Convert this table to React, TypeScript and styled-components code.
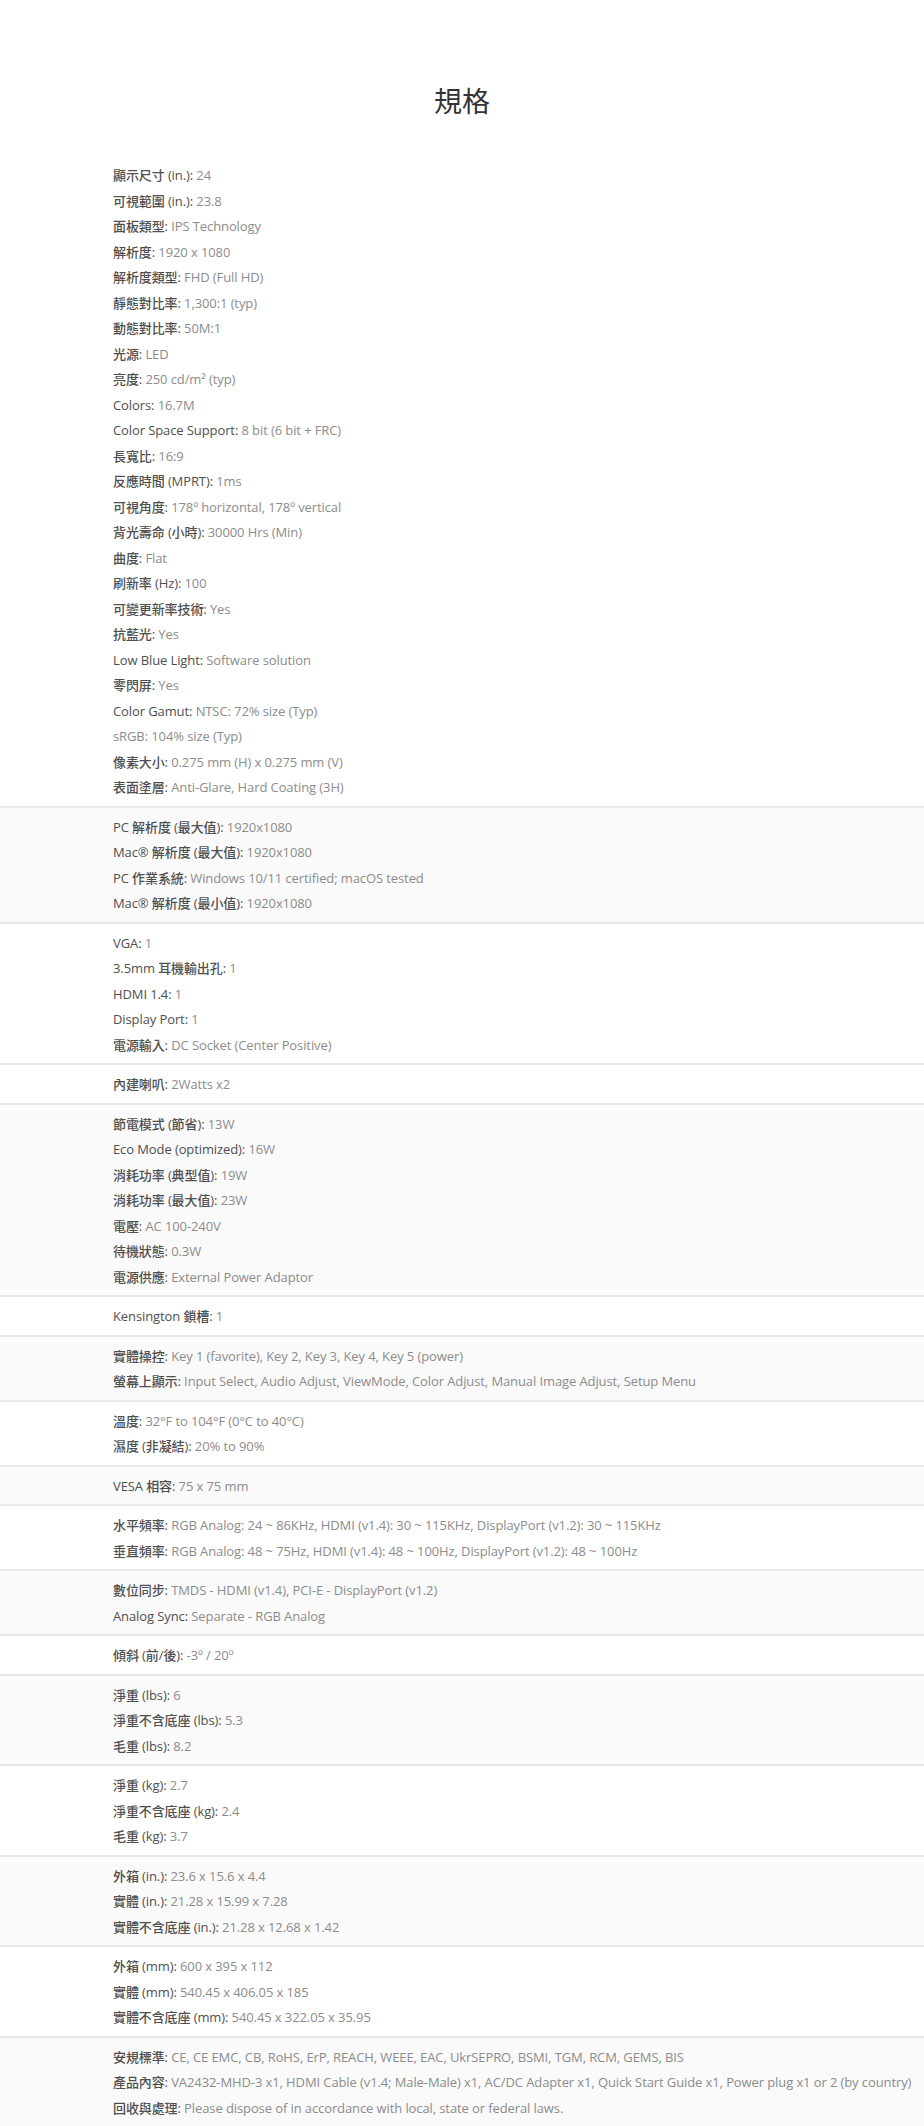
import styled, { createGlobalStyle } from 'styled-components'

type Spec = { label?: string; value: string }
type Group = { shaded?: boolean; rows: Spec[] }

const GlobalStyle = createGlobalStyle`
  html, body {
    margin: 0;
    padding: 0;
    background: #fff;
  }
  body {
    font-family: "Open Sans", "Noto Sans CJK TC", sans-serif;
  }
`

const groups: Group[] = [
  {
    rows: [
      { label: '顯示尺寸 (in.)', value: '24' },
      { label: '可視範圍 (in.)', value: '23.8' },
      { label: '面板類型', value: 'IPS Technology' },
      { label: '解析度', value: '1920 x 1080' },
      { label: '解析度類型', value: 'FHD (Full HD)' },
      { label: '靜態對比率', value: '1,300:1 (typ)' },
      { label: '動態對比率', value: '50M:1' },
      { label: '光源', value: 'LED' },
      { label: '亮度', value: '250 cd/m² (typ)' },
      { label: 'Colors', value: '16.7M' },
      { label: 'Color Space Support', value: '8 bit (6 bit + FRC)' },
      { label: '長寬比', value: '16:9' },
      { label: '反應時間 (MPRT)', value: '1ms' },
      { label: '可視角度', value: '178º horizontal, 178º vertical' },
      { label: '背光壽命 (小時)', value: '30000 Hrs (Min)' },
      { label: '曲度', value: 'Flat' },
      { label: '刷新率 (Hz)', value: '100' },
      { label: '可變更新率技術', value: 'Yes' },
      { label: '抗藍光', value: 'Yes' },
      { label: 'Low Blue Light', value: 'Software solution' },
      { label: '零閃屏', value: 'Yes' },
      { label: 'Color Gamut', value: 'NTSC: 72% size (Typ)' },
      { value: 'sRGB: 104% size (Typ)' },
      { label: '像素大小', value: '0.275 mm (H) x 0.275 mm (V)' },
      { label: '表面塗層', value: 'Anti-Glare, Hard Coating (3H)' },
    ],
  },
  {
    shaded: true,
    rows: [
      { label: 'PC 解析度 (最大值)', value: '1920x1080' },
      { label: 'Mac® 解析度 (最大值)', value: '1920x1080' },
      { label: 'PC 作業系統', value: 'Windows 10/11 certified; macOS tested' },
      { label: 'Mac® 解析度 (最小值)', value: '1920x1080' },
    ],
  },
  {
    rows: [
      { label: 'VGA', value: '1' },
      { label: '3.5mm 耳機輸出孔', value: '1' },
      { label: 'HDMI 1.4', value: '1' },
      { label: 'Display Port', value: '1' },
      { label: '電源輸入', value: 'DC Socket (Center Positive)' },
    ],
  },
  { rows: [{ label: '內建喇叭', value: '2Watts x2' }] },
  {
    shaded: true,
    rows: [
      { label: '節電模式 (節省)', value: '13W' },
      { label: 'Eco Mode (optimized)', value: '16W' },
      { label: '消耗功率 (典型值)', value: '19W' },
      { label: '消耗功率 (最大值)', value: '23W' },
      { label: '電壓', value: 'AC 100-240V' },
      { label: '待機狀態', value: '0.3W' },
      { label: '電源供應', value: 'External Power Adaptor' },
    ],
  },
  { rows: [{ label: 'Kensington 鎖槽', value: '1' }] },
  {
    shaded: true,
    rows: [
      { label: '實體操控', value: 'Key 1 (favorite), Key 2, Key 3, Key 4, Key 5 (power)' },
      {
        label: '螢幕上顯示',
        value: 'Input Select, Audio Adjust, ViewMode, Color Adjust, Manual Image Adjust, Setup Menu',
      },
    ],
  },
  {
    rows: [
      { label: '溫度', value: '32°F to 104°F (0°C to 40°C)' },
      { label: '濕度 (非凝結)', value: '20% to 90%' },
    ],
  },
  { shaded: true, rows: [{ label: 'VESA 相容', value: '75 x 75 mm' }] },
  {
    rows: [
      {
        label: '水平頻率',
        value: 'RGB Analog: 24 ~ 86KHz, HDMI (v1.4): 30 ~ 115KHz, DisplayPort (v1.2): 30 ~ 115KHz',
      },
      {
        label: '垂直頻率',
        value: 'RGB Analog: 48 ~ 75Hz, HDMI (v1.4): 48 ~ 100Hz, DisplayPort (v1.2): 48 ~ 100Hz',
      },
    ],
  },
  {
    shaded: true,
    rows: [
      { label: '數位同步', value: 'TMDS - HDMI (v1.4), PCI-E - DisplayPort (v1.2)' },
      { label: 'Analog Sync', value: 'Separate - RGB Analog' },
    ],
  },
  { rows: [{ label: '傾斜 (前/後)', value: '-3º / 20º' }] },
  {
    shaded: true,
    rows: [
      { label: '淨重 (lbs)', value: '6' },
      { label: '淨重不含底座 (lbs)', value: '5.3' },
      { label: '毛重 (lbs)', value: '8.2' },
    ],
  },
  {
    rows: [
      { label: '淨重 (kg)', value: '2.7' },
      { label: '淨重不含底座 (kg)', value: '2.4' },
      { label: '毛重 (kg)', value: '3.7' },
    ],
  },
  {
    shaded: true,
    rows: [
      { label: '外箱 (in.)', value: '23.6 x 15.6 x 4.4' },
      { label: '實體 (in.)', value: '21.28 x 15.99 x 7.28' },
      { label: '實體不含底座 (in.)', value: '21.28 x 12.68 x 1.42' },
    ],
  },
  {
    rows: [
      { label: '外箱 (mm)', value: '600 x 395 x 112' },
      { label: '實體 (mm)', value: '540.45 x 406.05 x 185' },
      { label: '實體不含底座 (mm)', value: '540.45 x 322.05 x 35.95' },
    ],
  },
  {
    shaded: true,
    rows: [
      {
        label: '安規標準',
        value: 'CE, CE EMC, CB, RoHS, ErP, REACH, WEEE, EAC, UkrSEPRO, BSMI, TGM, RCM, GEMS, BIS',
      },
      {
        label: '產品內容',
        value:
          'VA2432-MHD-3 x1, HDMI Cable (v1.4; Male-Male) x1, AC/DC Adapter x1, Quick Start Guide x1, Power plug x1 or 2 (by country)',
      },
      { label: '回收與處理', value: 'Please dispose of in accordance with local, state or federal laws.' },
    ],
  },
]

function App() {
  return (
    <>
      <GlobalStyle />
      <Page>
        <Header>
          <Title>規格</Title>
        </Header>
        {groups.map((group, i) => (
          <Section key={i} $shaded={!!group.shaded}>
            {group.rows.map((row, j) => (
              <Row key={j}>
                {row.label && <Label>{row.label}: </Label>}
                <Value>{row.value}</Value>
              </Row>
            ))}
          </Section>
        ))}
      </Page>
    </>
  )
}

export default App

const Page = styled.div`
  width: 100%;
  display: flex;
  flex-direction: column;
`

const Header = styled.div`
  display: flex;
  justify-content: center;
  padding: 84px 0 38px;
`

const Title = styled.h2`
  margin: 0;
  font-family: "Open Sans", "Noto Sans CJK TC", sans-serif;
  font-size: 28px;
  line-height: 34px;
  font-weight: 400;
  color: #333;
`

const Section = styled.div<{ $shaded: boolean }>`
  display: flex;
  flex-direction: column;
  padding: 7px 0 5px 113px;
  background: ${(p) => (p.$shaded ? '#fafafa' : '#fff')};
  border-bottom: 2px solid #e8e8e8;
`

const Row = styled.div`
  font-size: 13px;
  line-height: 25.5px;
  letter-spacing: -0.1px;
  white-space: nowrap;
`

const Label = styled.span`
  font-weight: 500;
  color: #4f4f4f;
`

const Value = styled.span`
  font-weight: 400;
  color: #8c8c8c;
`
